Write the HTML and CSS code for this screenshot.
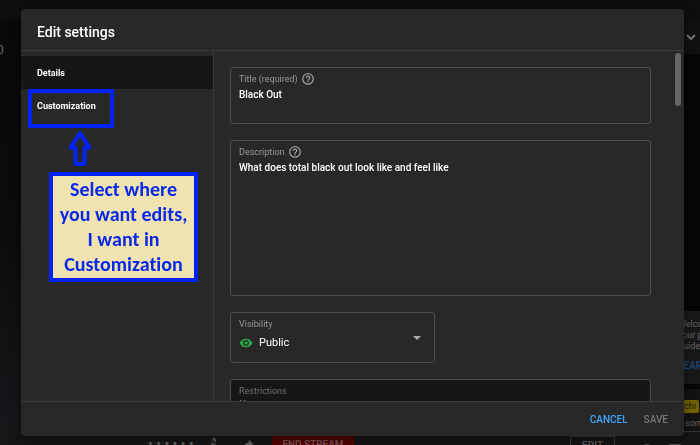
FILE: index.html
```html
<!DOCTYPE html>
<html lang="en">
<head>
    <meta charset="UTF-8">
    <meta name="viewport" content="width=device-width, initial-scale=1.0">
    <title>Edit settings</title>
    <link rel="stylesheet" href="styles.css">
</head>
<body>
    <!-- Live dashboard behind the dialog -->
    <div class="studio">
        <div class="topbar"></div>
        <div class="workspace">
            <div class="stream">
                <div class="preview">0</div>
                <div class="stream-bar">
                    <span class="dots">• • • • • •</span>
                    <svg class="bar-icon" viewBox="0 0 24 24"><path d="M3 3l18 18M9 4l6 7V5a3 3 0 0 0-6-1zM6 11a6 6 0 0 0 9 5M12 17v4"/></svg>
                    <svg class="bar-icon" viewBox="0 0 24 24"><path d="M10 6l8 8-8 8v-5c-5 0-8 2-10 5 1-6 4-10 10-11z"/></svg>
                    <button class="end-btn" type="button">END STREAM</button>
                    <button class="edit-btn" type="button">EDIT</button>
                </div>
            </div>
            <div class="chat">
                <div class="chat-header">
                    <svg class="chevron" viewBox="0 0 10 10"><path d="M1 3l4 4 4-4"/></svg>
                </div>
                <div class="chat-log"></div>
                <div class="chat-notice">
                    <p>Welcome<br>your privacy<br>guidelines</p>
                    <a href="#">LEARN</a>
                </div>
                <div class="chat-input">
                    <span class="author">chi</span>
                    <span class="hint">something</span>
                </div>
                <div class="chat-tools">
                    <svg class="tool-icon" viewBox="0 0 12 12"><circle cx="6" cy="6" r="5"/></svg>
                    <svg class="tool-icon" viewBox="0 0 12 12"><rect x="0" y="1" width="12" height="9" rx="1"/></svg>
                </div>
            </div>
        </div>
    </div>

    <div class="dialog" role="dialog" aria-labelledby="dialogTitle">
        <div class="dialog-header">
            <h1 id="dialogTitle">Edit settings</h1>
        </div>

        <div class="dialog-body">
            <nav class="sidebar">
                <a href="#details" class="tab active">Details</a>
                <a href="#customization" class="tab">Customization</a>
            </nav>

            <form class="form" id="settingsForm">
                <div class="field">
                    <div class="field-label">
                        <label for="title">Title (required)</label>
                        <svg class="help" viewBox="0 0 24 24"><path d="M11 18h2v-2h-2v2zm1-16C6.480 2 2 6.480 2 12s4.480 10 10 10 10-4.480 10-10S17.520 2 12 2zm0 18c-4.410 0-8-3.590-8-8s3.590-8 8-8 8 3.590 8 8-3.590 8-8 8zm0-14c-2.210 0-4 1.790-4 4h2c0-1.100.9-2 2-2s2 .9 2 2c0 2-3 1.750-3 5h2c0-2.250 3-2.500 3-5 0-2.210-1.790-4-4-4z"/></svg>
                    </div>
                    <input type="text" id="title" value="Black Out">
                </div>

                <div class="field field-tall">
                    <div class="field-label">
                        <label for="description">Description</label>
                        <svg class="help" viewBox="0 0 24 24"><path d="M11 18h2v-2h-2v2zm1-16C6.480 2 2 6.480 2 12s4.480 10 10 10 10-4.480 10-10S17.520 2 12 2zm0 18c-4.410 0-8-3.590-8-8s3.590-8 8-8 8 3.590 8 8-3.590 8-8 8zm0-14c-2.210 0-4 1.790-4 4h2c0-1.100.9-2 2-2s2 .9 2 2c0 2-3 1.750-3 5h2c0-2.250 3-2.500 3-5 0-2.210-1.790-4-4-4z"/></svg>
                    </div>
                    <textarea id="description">What does total black out look like and feel like</textarea>
                </div>

                <div class="field field-select">
                    <div class="select-main">
                        <div class="field-label">
                            <label for="visibility">Visibility</label>
                        </div>
                        <div class="select-row">
                            <svg class="eye" viewBox="0 0 24 24"><path d="M12 4.500C7 4.500 2.730 7.610 1 12c1.730 4.390 6 7.500 11 7.500s9.270-3.110 11-7.500c-1.730-4.390-6-7.500-11-7.500zM12 17c-2.760 0-5-2.240-5-5s2.240-5 5-5 5 2.240 5 5-2.240 5-5 5zm0-8c-1.660 0-3 1.340-3 3s1.340 3 3 3 3-1.340 3-3-1.340-3-3-3z"/></svg>
                            <select id="visibility">
                                <option>Public</option>
                                <option>Unlisted</option>
                                <option>Private</option>
                            </select>
                        </div>
                    </div>
                    <svg class="caret" viewBox="0 0 8 4"><path d="M0 0h8L4 4z"/></svg>
                </div>

                <div class="field field-disabled">
                    <div class="field-label">
                        <label for="restrictions">Restrictions</label>
                    </div>
                    <input type="text" id="restrictions" value="None" disabled>
                </div>
            </form>
            <div class="scroll-thumb"></div>
        </div>

        <div class="dialog-footer">
            <button type="button" class="btn btn-cancel">CANCEL</button>
            <button type="submit" form="settingsForm" class="btn btn-save">SAVE</button>
        </div>

        <!-- Tutorial callout -->
        <div class="highlight"></div>
        <div class="callout">
            <svg class="arrow" viewBox="0 0 24 36"><path d="M12 3L2.500 17.500h5V34h9V17.500h5z"/></svg>
            <p class="note">Select where you want edits, I want in Customization</p>
        </div>
    </div>
</body>
</html>
```
FILE: styles.css
```css
* {
    margin: 0;
    padding: 0;
    box-sizing: border-box;
}

body {
    font-family: Roboto, "Liberation Sans", sans-serif;
    font-size: 10px;
    background: #070707;
    color: #fff;
    overflow: hidden;
}

button,
input,
textarea,
select {
    font: inherit;
    color: inherit;
    background: none;
    border: none;
    outline: none;
}

a {
    text-decoration: none;
}

/* Dashboard */
.studio {
    height: 100vh;
    display: flex;
    flex-direction: column;
    color: #666;
}

.topbar {
    height: 20px;
    background: #0e0e0e;
}

.workspace {
    flex: 1;
    display: flex;
    min-height: 0;
}

.stream {
    flex: 1;
    display: flex;
    flex-direction: column;
}

.preview {
    flex: 1;
    padding-top: 22px;
    font-size: 12px;
    line-height: 16px;
    text-indent: -3px;
    background: linear-gradient(#090909, #0b0c0c 50%, #15171a);
}

.stream-bar {
    height: 21px;
    display: flex;
    align-items: flex-start;
    padding: 12px 8px 0 148px;
    background: #171717;
    overflow: hidden;
}

.dots {
    width: 60px;
    line-height: 16px;
    font-size: 14px;
}

.bar-icon {
    width: 12px;
    height: 12px;
    margin-top: 1px;
    margin-right: 24px;
    fill: #666;
    stroke: #666;
    stroke-width: 1;
}

.end-btn {
    width: 82px;
    height: 24px;
    margin-right: auto;
    margin-left: -8px;
    font-weight: 500;
    line-height: 12px;
    padding-bottom: 6px;
    background: #5c0000;
    color: #806060;
}

.edit-btn {
    width: 45px;
    height: 28px;
    padding-bottom: 10px;
    border: 1px solid #444;
    font-weight: 500;
}

.chat {
    width: 77px;
    display: flex;
    flex-direction: column;
    white-space: nowrap;
    overflow: hidden;
}

.chat-header {
    height: 34px;
    padding: 12px 4px 0 0;
    text-align: right;
    background: #111;
}

.chevron {
    width: 10px;
    height: 10px;
    fill: none;
    stroke: #777;
    stroke-width: 2;
}

.chat-log {
    flex: 1;
    background: #050505;
}

.chat-notice {
    height: 73px;
    padding: 8px 0 0 55px;
    font-size: 9px;
    line-height: 11px;
    background: #191919;
}

.chat-notice a {
    display: block;
    margin-top: 8px;
    font-size: 10px;
    font-weight: 500;
    color: #1c4a75;
}

.chat-input {
    height: 43px;
    margin-top: 5px;
    padding: 11px 1px 0 40px;
    display: flex;
    flex-direction: column;
    align-items: flex-end;
    background: #131313;
    border-bottom: 1px solid #333;
}

.author {
    padding: 0 3px 0 24px;
    font-size: 9px;
    line-height: 13px;
    border-radius: 2px;
    background: #756300;
    color: #1c1c1c;
}

.hint {
    width: 14px;
    margin-top: 4px;
    font-size: 9px;
    line-height: 12px;
}

.chat-tools {
    height: 13px;
    padding: 11px 0 0 18px;
    display: flex;
    gap: 16px;
    background: #161616;
}

.tool-icon {
    width: 12px;
    height: 12px;
    flex: none;
    fill: #555;
}

/* Dialog */
.dialog {
    position: fixed;
    inset: 9px 16px 9px 21px;
    display: flex;
    flex-direction: column;
    border-radius: 4px;
    background: #282828;
    box-shadow: 0 4px 12px rgba(0, 0, 0, 0.5);
}

.dialog-header {
    padding: 14px 16px 9px;
    border-bottom: 1px solid #3a3a3a;
}

.dialog-header h1 {
    font-size: 14px;
    font-weight: 500;
    line-height: 18px;
}

.dialog-body {
    position: relative;
    flex: 1;
    display: flex;
    min-height: 0;
    overflow: hidden;
}

.sidebar {
    width: 193px;
    flex: none;
    padding-top: 5px;
    border-right: 1px solid #3a3a3a;
}

.tab {
    display: block;
    padding: 2px 16px 0;
    font-size: 9px;
    font-weight: 700;
    line-height: 31px;
    color: #fff;
}

.tab.active {
    background: #161616;
}

.form {
    flex: 1;
    display: flex;
    flex-direction: column;
    gap: 16px;
    padding: 16px 33px 0 16px;
}

.field {
    flex: none;
    height: 57px;
    padding: 4px 8px;
    border: 1px solid #4c4c4c;
    border-radius: 3px;
    color: #fff;
}

.field-label {
    display: flex;
    align-items: center;
    gap: 3px;
    height: 14px;
}

.field label {
    padding-top: 1px;
    font-size: 9px;
    line-height: 13px;
    color: #999;
}

.help {
    width: 14px;
    height: 14px;
    fill: #aaa;
}

.field input,
.field textarea {
    display: block;
    width: 100%;
    margin-top: 1px;
    font-size: 10px;
    font-weight: 500;
    line-height: 16px;
    resize: none;
}

.field-tall {
    height: 156px;
}

.field-tall textarea {
    height: 128px;
}

.field-select {
    width: 205px;
    height: 51px;
    display: flex;
    justify-content: space-between;
    padding-right: 13px;
}

.select-row {
    display: flex;
    align-items: center;
    gap: 6px;
    margin-top: 4px;
}

.eye {
    width: 14px;
    height: 14px;
    fill: #2ba640;
}

.field select {
    width: 120px;
    appearance: none;
    font-size: 11px;
    line-height: 16px;
}

.caret {
    align-self: center;
    width: 8px;
    height: 4px;
    fill: #aaa;
}

.field-disabled {
    background: #161616;
    color: #777;
}

.field-disabled label {
    color: #707070;
}

.field-disabled input {
    line-height: 12px;
}

.scroll-thumb {
    position: absolute;
    top: 2px;
    right: 3px;
    width: 6px;
    height: 53px;
    border-radius: 3px;
    background: #666;
}

.dialog-footer {
    display: flex;
    align-items: center;
    justify-content: flex-end;
    gap: 16px;
    height: 35px;
    padding-right: 16px;
    border-top: 1px solid #3a3a3a;
}

.btn {
    font-size: 10px;
    font-weight: 500;
    cursor: pointer;
}

.btn-cancel {
    color: #3ea6ff;
}

.btn-save {
    color: #777;
}

/* Callout drawn over the dialog */
.highlight {
    position: absolute;
    top: 80px;
    left: 7px;
    width: 86px;
    height: 39px;
    border: 4px solid #0022f5;
}

.callout {
    position: absolute;
    top: 121px;
    left: 28px;
    width: 149px;
}

.arrow {
    display: block;
    width: 24px;
    height: 36px;
    margin: 0 0 6px 19px;
    fill: none;
    stroke: #0022f5;
    stroke-width: 4;
    stroke-linejoin: round;
}

.note {
    padding: 1px 4px;
    border: 4px solid #0022f5;
    background: #f0e3b0;
    color: #0828ea;
    font-family: Carlito, Calibri, "Open Sans", sans-serif;
    font-size: 20px;
    font-weight: 700;
    font-variant-ligatures: none;
    line-height: 25px;
    text-align: center;
}
```
